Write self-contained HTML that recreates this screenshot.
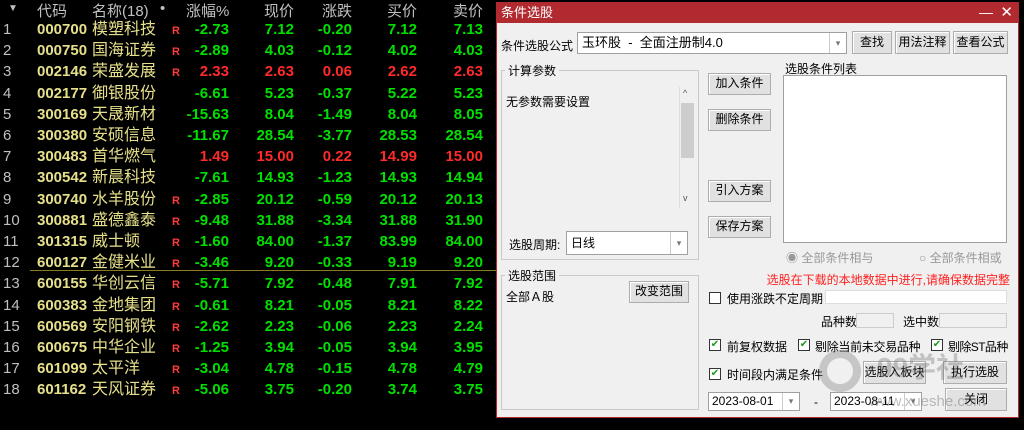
<!DOCTYPE html>
<html><head><meta charset="utf-8"><style>
*{margin:0;padding:0;box-sizing:border-box}
body{width:1024px;height:430px;background:#000;position:relative;overflow:hidden;font-family:"Liberation Sans","Noto Sans CJK SC",sans-serif}
.a{position:absolute;white-space:nowrap}
.h{color:#c0c0c0;font-size:15px;top:0}
.r{font-size:15px;height:21px;line-height:21px}
.n{color:#c0c0c0;left:3px;width:20px}
.c{color:#e6e08a;left:37px;font-weight:bold}
.nm{color:#e6e08a;left:92px;font-size:16px}
.R{color:#ff3b3b;left:172px;font-size:11px;font-weight:bold;margin-top:2px}
.v{text-align:right;font-weight:bold}
.g{color:#00e000}.rd{color:#ff2a2a}
.d{position:absolute;left:496px;top:2px;width:523px;height:416px;background:#f0f0f0;border:1px solid #b02a30;font-size:12px;color:#000}
.d .a{font-size:12px}
.btn{position:absolute;background:#e1e1e1;border:1px solid #adadad;box-shadow:inset 1px 1px #fff;text-align:center;font-size:12px;line-height:19px}
.box{position:absolute;background:#fff;border:1px solid #a0a0a0}
.grp{position:absolute;border:1px solid #c8c8c8}
.cb{position:absolute;width:12px;height:12px;border:1px solid #333;background:#fff;font-size:10px;line-height:10px;color:#1a9a1a;text-align:center}
.arr{position:absolute;right:0;top:0;bottom:0;width:17px;border-left:1px solid #ccc;color:#777;font-size:9px;text-align:center}
</style></head><body>
<div class="a h" style="left:8px;font-size:10px;top:3px">▼</div>
<div class="a h" style="left:37px">代码</div>
<div class="a h" style="left:92px">名称(18)</div>
<div class="a h" style="left:160px">•</div>
<div class="a h" style="left:186px">涨幅%</div>
<div class="a h" style="left:264px">现价</div>
<div class="a h" style="left:322px">涨跌</div>
<div class="a h" style="left:387px">买价</div>
<div class="a h" style="left:453px">卖价</div>
<div class="a" style="left:30px;top:270px;width:466px;height:1px;background:#8a7a20"></div>
<div id="rows"></div>
<script>
var d=[["000700","模塑科技",1,"-2.73","7.12","-0.20","7.12","7.13"],["000750","国海证券",1,"-2.89","4.03","-0.12","4.02","4.03"],["002146","荣盛发展",1,"2.33","2.63","0.06","2.62","2.63"],["002177","御银股份",0,"-6.61","5.23","-0.37","5.22","5.23"],["300169","天晟新材",0,"-15.63","8.04","-1.49","8.04","8.05"],["300380","安硕信息",0,"-11.67","28.54","-3.77","28.53","28.54"],["300483","首华燃气",0,"1.49","15.00","0.22","14.99","15.00"],["300542","新晨科技",0,"-7.61","14.93","-1.23","14.93","14.94"],["300740","水羊股份",1,"-2.85","20.12","-0.59","20.12","20.13"],["300881","盛德鑫泰",1,"-9.48","31.88","-3.34","31.88","31.90"],["301315","威士顿",1,"-1.60","84.00","-1.37","83.99","84.00"],["600127","金健米业",1,"-3.46","9.20","-0.33","9.19","9.20"],["600155","华创云信",1,"-5.71","7.92","-0.48","7.91","7.92"],["600383","金地集团",1,"-0.61","8.21","-0.05","8.21","8.22"],["600569","安阳钢铁",1,"-2.62","2.23","-0.06","2.23","2.24"],["600675","中华企业",1,"-1.25","3.94","-0.05","3.94","3.95"],["601099","太平洋",1,"-3.04","4.78","-0.15","4.78","4.79"],["601162","天风证券",1,"-5.06","3.75","-0.20","3.74","3.75"]];
var h="",R=[229,294,352,417,483];
d.forEach(function(r,i){var t=19+i*21.2;var cl=r[3][0]=="-"?"g":"rd";
h+='<div class="a r n" style="top:'+t+'px">'+(i+1)+'</div><div class="a r c" style="top:'+t+'px">'+r[0]+'</div><div class="a r nm" style="top:'+t+'px">'+r[1]+'</div>';
if(r[2])h+='<div class="a r R" style="top:'+t+'px">R</div>';
for(var k=0;k<5;k++)h+='<div class="a r v '+cl+'" style="top:'+t+'px;left:'+(R[k]-70)+'px;width:70px">'+r[3+k]+'</div>';});
document.getElementById('rows').innerHTML=h;
</script>
<div class="d">
<div class="a" style="left:-1px;top:-1px;width:523px;height:21px;background:#b02a30;color:#fff;font-size:13px;line-height:21px;padding-left:5px">条件选股<span style="position:absolute;right:26px;font-size:14px">—</span><span style="position:absolute;right:6px;font-size:15px">✕</span></div>
<div class="a" style="left:4px;top:34px">条件选股公式</div>
<div class="box" style="left:80px;top:29px;width:270px;height:22px;line-height:20px;padding-left:4px;font-size:13px">玉环股 &nbsp;- &nbsp;全面注册制4.0<div class="arr" style="line-height:20px">▾</div></div>
<div class="btn" style="left:355px;top:28px;width:40px;height:23px;line-height:21px">查找</div>
<div class="btn" style="left:398px;top:28px;width:55px;height:23px;line-height:21px">用法注释</div>
<div class="btn" style="left:456px;top:28px;width:55px;height:23px;line-height:21px">查看公式</div>
<div class="grp" style="left:4px;top:67px;width:198px;height:190px"></div>
<div class="a" style="left:8px;top:59px;background:#f0f0f0;padding:0 3px">计算参数</div>
<div class="a" style="left:9px;top:90px">无参数需要设置</div>
<div class="a" style="left:182px;top:84px;width:15px;height:121px;border-left:1px solid #ddd"></div>
<div class="a" style="left:184px;top:100px;width:13px;height:55px;background:#cdcdcd"></div>
<div class="a" style="left:186px;top:85px;font-size:9px;color:#555">^</div>
<div class="a" style="left:186px;top:190px;font-size:9px;color:#555">v</div>
<div class="btn" style="left:211px;top:70px;width:63px;height:22px">加入条件</div>
<div class="btn" style="left:211px;top:106px;width:63px;height:22px">删除条件</div>
<div class="btn" style="left:211px;top:177px;width:63px;height:22px">引入方案</div>
<div class="btn" style="left:211px;top:213px;width:63px;height:22px">保存方案</div>
<div class="a" style="left:288px;top:57px">选股条件列表</div>
<div class="box" style="left:286px;top:72px;width:224px;height:168px"></div>
<div class="a" style="left:12px;top:233px">选股周期:</div>
<div class="box" style="left:69px;top:228px;width:122px;height:24px;line-height:22px;padding-left:4px">日线<div class="arr" style="line-height:22px">▾</div></div>
<div class="grp" style="left:4px;top:272px;width:198px;height:135px"></div>
<div class="a" style="left:8px;top:264px;background:#f0f0f0;padding:0 3px">选股范围</div>
<div class="a" style="left:9px;top:285px">全部Ａ股</div>
<div class="btn" style="left:132px;top:278px;width:60px;height:22px">改变范围</div>
<div class="a" style="left:289px;top:246px;color:#999">◉ 全部条件相与</div>
<div class="a" style="left:422px;top:246px;color:#999">○ 全部条件相或</div>
<div class="a" style="right:8px;top:268px;color:#ff2020">选股在下载的本地数据中进行,请确保数据完整</div>
<div class="cb" style="left:212px;top:289px"></div>
<div class="a" style="left:230px;top:287px">使用涨跌不定周期</div>
<div class="box" style="left:328px;top:287px;width:182px;height:14px;border-color:#ddd"></div>
<div class="a" style="left:324px;top:310px">品种数</div>
<div class="box" style="left:359px;top:310px;width:38px;height:15px;background:#f0f0f0;border-color:#ccc"></div>
<div class="a" style="left:406px;top:310px">选中数</div>
<div class="box" style="left:442px;top:310px;width:68px;height:15px;background:#f0f0f0;border-color:#ccc"></div>
<div class="cb" style="left:212px;top:336px">✔</div><div class="a" style="left:230px;top:335px">前复权数据</div>
<div class="cb" style="left:301px;top:336px">✔</div><div class="a" style="left:318px;top:335px;letter-spacing:-0.3px">剔除当前未交易品种</div>
<div class="cb" style="left:434px;top:336px">✔</div><div class="a" style="left:451px;top:335px;letter-spacing:-0.6px">剔除ST品种</div>
<div class="cb" style="left:212px;top:365px">✔</div><div class="a" style="left:230px;top:363px">时间段内满足条件</div>
<div class="btn" style="left:366px;top:358px;width:63px;height:23px;line-height:21px">选股入板块</div>
<div class="btn" style="left:446px;top:358px;width:64px;height:23px;line-height:21px">执行选股</div>
<div class="box" style="left:211px;top:389px;width:92px;height:19px;line-height:17px;padding-left:3px">2023-08-01<div class="arr" style="line-height:17px">▾</div></div>
<div class="a" style="left:317px;top:392px">-</div>
<div class="box" style="left:333px;top:389px;width:92px;height:19px;line-height:17px;padding-left:3px">2023-08-11<div class="arr" style="line-height:17px">▾</div></div>
<div class="btn" style="left:448px;top:385px;width:62px;height:23px;line-height:21px">关闭</div>
<div class="a" style="left:322px;top:347px;width:42px;height:42px;border:8px solid rgba(120,120,120,.35);border-radius:50%"></div>
<div class="a" style="left:380px;top:343px;font-size:28px;color:rgba(110,110,110,.35);font-weight:bold">99学社</div>
<div class="a" style="left:372px;top:390px;font-size:15px;color:rgba(110,110,110,.45)">www.xueshe.com</div>
</div>
</body></html>
